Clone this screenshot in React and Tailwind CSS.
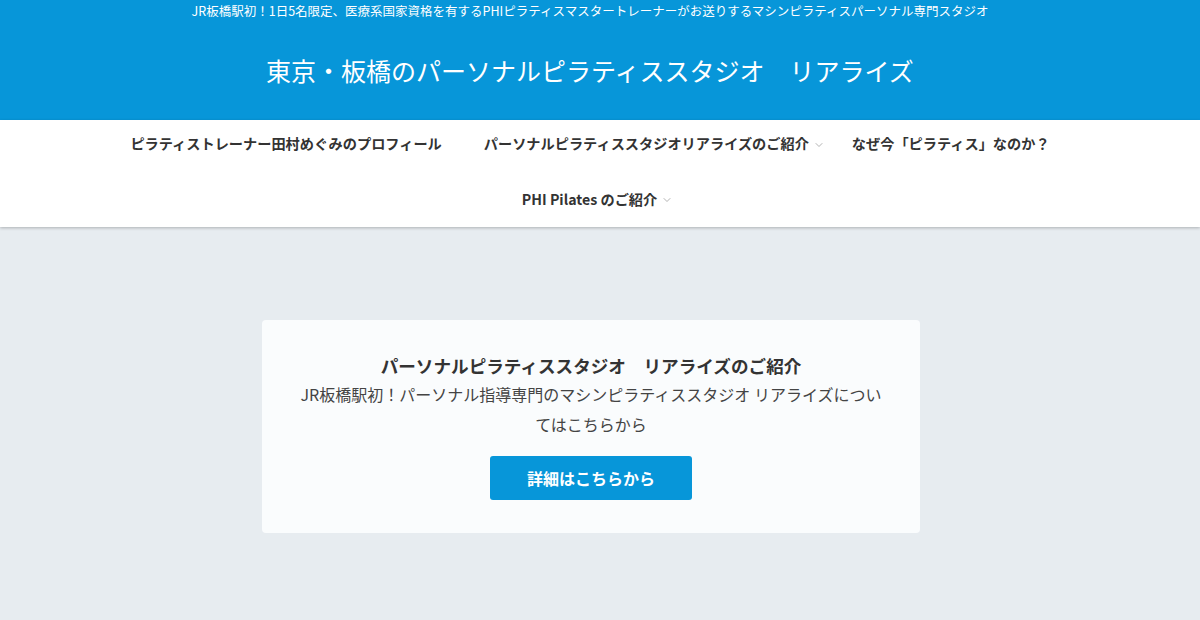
import React from 'react';
import { ChevronDown } from 'lucide-react';

const navRow1 = [
  { label: 'ピラティストレーナー田村めぐみのプロフィール', sub: false },
  { label: 'パーソナルピラティススタジオリアライズのご紹介', sub: true },
  { label: 'なぜ今「ピラティス」なのか？', sub: false },
];

const NavItem = ({ label, sub, h }) => (
  <li className={`flex items-center ${h} pl-[21px] ${sub ? 'pr-[6px]' : 'pr-[21px]'}`}>
    <a href="#" className="text-[14.2px] font-bold text-[#333] leading-none">{label}</a>
    {sub && <ChevronDown size={12} strokeWidth={1.5} className="ml-[4px] mt-[2px] text-[#999]" />}
  </li>
);

const App = () => {
  return (
    <div className="min-h-[620px] bg-[#e7ecf0]" style={{ fontFamily: '"Noto Sans CJK JP", "Noto Sans", sans-serif' }}>
      <header className="bg-[#0796d9] h-[120px] flex flex-col items-center pr-[20px]">
        <p className="text-white text-[12.5px] leading-none pt-[5px]">
          JR板橋駅初！1日5名限定、医療系国家資格を有するPHIピラティスマスタートレーナーがお送りするマシンピラティスパーソナル専門スタジオ
        </p>
        <h1 className="text-white text-[25px] leading-none mt-[40px]">
          東京・板橋のパーソナルピラティススタジオ　リアライズ
        </h1>
      </header>

      <nav className="bg-white shadow-[0_1px_3px_rgba(0,0,0,0.25)] relative">
        <ul className="flex flex-wrap justify-center pr-[20px]">
          {navRow1.map((n) => (
            <NavItem key={n.label} {...n} h="h-[47px]" />
          ))}
        </ul>
        <ul className="flex justify-center pr-[20px]">
          <NavItem label="PHI Pilates のご紹介" sub h="h-[60px] pt-[4px]" />
        </ul>
      </nav>

      <main className="flex justify-center pt-[93px] pb-[87px] pr-[18px]">
        <section className="w-[658px] bg-[#fafcfd] rounded-[4px] px-8 pt-8 pb-[33px] flex flex-col items-center text-center">
          <h2 className="text-[17.6px] font-bold text-[#333] leading-[28px]">
            パーソナルピラティススタジオ　リアライズのご紹介
          </h2>
          <p className="text-[16px] text-[#444] leading-[29.5px]">
            JR板橋駅初！パーソナル指導専門のマシンピラティススタジオ リアライズについてはこちらから
          </p>
          <a href="#" className="mt-[17px] inline-block bg-[#0796d9] text-white font-bold text-[16px] leading-[24px] py-[10px] px-[37px] rounded-[3px]">
            詳細はこちらから
          </a>
        </section>
      </main>
    </div>
  );
};

export default App;
